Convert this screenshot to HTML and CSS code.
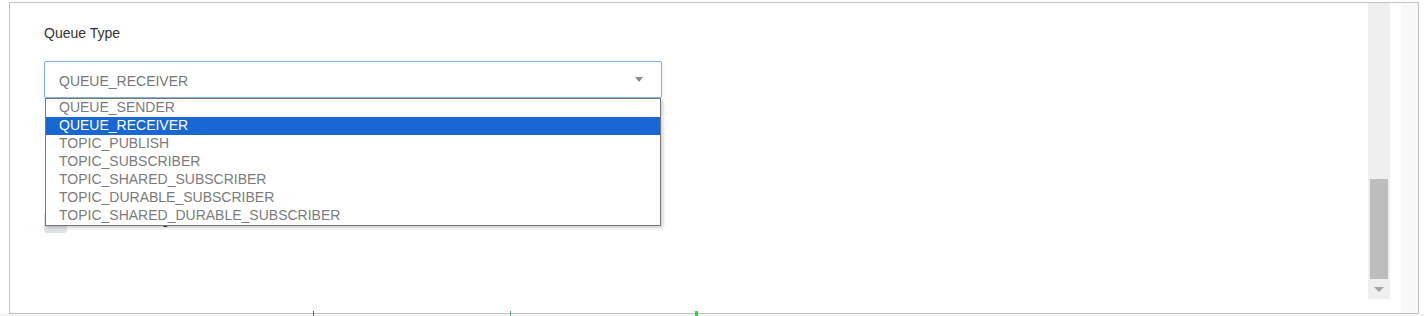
FILE: index.html
```html
<!DOCTYPE html>
<html lang="en">

<head>
  <meta charset="UTF-8">
  <meta name="viewport" content="width=device-width, initial-scale=1.0">
  <title>Queue settings</title>
  <link rel="stylesheet" href="styles.css">
</head>

<body>
  <div class="page">
    <div class="frame">
      <div class="content">
        <div class="field-label">Queue Type</div>
        <div class="select-wrap">
          <div class="select">
            <span class="select-value">QUEUE_RECEIVER</span>
            <span class="caret"></span>
          </div>
          <ul class="options">
            <li>QUEUE_SENDER</li>
            <li class="active">QUEUE_RECEIVER</li>
            <li>TOPIC_PUBLISH</li>
            <li>TOPIC_SUBSCRIBER</li>
            <li>TOPIC_SHARED_SUBSCRIBER</li>
            <li>TOPIC_DURABLE_SUBSCRIBER</li>
            <li>TOPIC_SHARED_DURABLE_SUBSCRIBER</li>
          </ul>
        </div>
        <div class="check-row">
          <span class="check-box"></span>
          <span class="check-text">Enable Tracing</span>
        </div>
      </div>
      <div class="track">
        <div class="thumb"></div>
        <div class="arrow-btn"><span class="arrow"></span></div>
      </div>
      <div class="gap"></div>
      <div class="strip"></div>
    </div>
    <div class="bottom-strip"></div>

    <!-- markers sitting on the bottom border -->
    <span class="tick tick-1"></span>
    <span class="tick tick-2"></span>
    <span class="tick tick-3"></span>
  </div>
</body>

</html>
```

FILE: styles.css
```css
* {
  box-sizing: border-box;
}

body {
  margin: 0;
  background-color: #fff;
  font-family: "Liberation Sans", Arial, sans-serif;
  font-size: 14px;
  color: #333;
}

.page {
  position: relative;
  width: 1424px;
  height: 316px;
  padding-top: 2px;
  overflow: hidden;
}

.frame {
  display: flex;
  margin-left: 9px;
  width: 1410px;
  height: 312px;
  border: 1px solid #c2c2c2;
  background-color: #fff;
}

.bottom-strip {
  height: 2px;
  background-color: #f4f4f4;
}

.content {
  width: 1358px;
  padding: 20px 0 0 34px;
}

.field-label {
  line-height: 20px;
  color: #333;
}

.select-wrap {
  position: relative;
  margin-top: 18px;
  width: 618px;
}

.select {
  display: flex;
  justify-content: space-between;
  align-items: center;
  height: 37px;
  padding: 3px 18px 0 14px;
  border: 1px solid #7fb2e3;
  border-radius: 2px;
  background-color: #fff;
  box-shadow: 0 2px 4px rgba(0, 0, 0, 0.08);
  color: #777;
}

.caret {
  width: 0;
  height: 0;
  border-left: 4px solid transparent;
  border-right: 4px solid transparent;
  border-top: 5px solid #8c8c8c;
  margin-top: -3px;
}

.options {
  position: absolute;
  top: 37px;
  left: 1px;
  z-index: 2;
  margin: 0;
  padding: 0;
  list-style: none;
  width: 616px;
  border: 1px solid #767676;
  background-color: #fff;
  box-shadow: 2px 2px 3px rgba(0, 0, 0, 0.18);
}

.options li {
  height: 18px;
  padding-left: 13px;
  line-height: 16px;
  color: #7b7b7b;
  white-space: nowrap;
}

.options .active {
  background-color: #1967d2;
  color: #fff;
}

.check-row {
  display: flex;
  align-items: flex-start;
  margin-top: 113px;
}

.check-box {
  width: 23px;
  height: 21px;
  margin-top: 1px;
  border-radius: 3px;
  background-color: #dde2e5;
}

.check-text {
  margin-left: 9px;
  line-height: 16px;
  color: #333;
}

.track {
  display: flex;
  flex-direction: column;
  justify-content: flex-end;
  width: 22px;
  height: 296px;
  padding: 0 2px;
  background-color: #efefef;
}

.thumb {
  height: 100px;
  background-color: #bdbdbd;
}

.arrow-btn {
  display: flex;
  justify-content: center;
  align-items: center;
  height: 20px;
}

.arrow {
  width: 0;
  height: 0;
  border-left: 5px solid transparent;
  border-right: 5px solid transparent;
  border-top: 5px solid #a3a3a3;
}

.gap {
  width: 11px;
}

.strip {
  width: 17px;
  background-color: #f8f8f8;
}

.tick {
  position: absolute;
  top: 311px;
  height: 5px;
}

.tick-1 {
  left: 313px;
  width: 1px;
  background-color: #2b7a52;
}

.tick-2 {
  left: 510px;
  width: 1px;
  background-color: #5e9d8c;
}

.tick-3 {
  left: 695px;
  width: 3px;
  background-color: #12f012;
}
```
